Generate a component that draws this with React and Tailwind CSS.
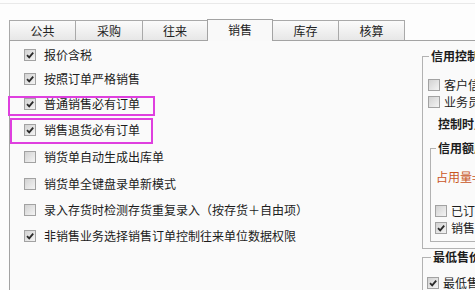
const tabs = [
  { label: '公共', w: 'w-[67px]' },
  { label: '采购', w: 'w-[68px]' },
  { label: '往来', w: 'w-[66px]' },
  { label: '销售', w: 'w-[66px]', active: true },
  { label: '库存', w: 'w-[67px]' },
  { label: '核算', w: 'w-[67px]' },
]

const options = [
  { text: '报价含税', checked: true, h: 'h-[24px]' },
  { text: '按照订单严格销售', checked: true, h: 'h-[24px]' },
  { text: '普通销售必有订单', checked: true, h: 'h-[26px]' },
  { text: '销售退货必有订单', checked: true, h: 'h-[26px]' },
  { text: '销货单自动生成出库单', checked: false, h: 'h-[28px]' },
  { text: '销货单全键盘录单新模式', checked: false, h: 'h-[26px]' },
  { text: '录入存货时检测存货重复录入（按存货＋自由项）', checked: false, h: 'h-[26px]' },
  { text: '非销售业务选择销售订单控制往来单位数据权限', checked: true, h: 'h-[26px]' },
]

function Box({ checked }) {
  return (
    <span className="inline-flex h-[12px] w-[12px] shrink-0 items-center justify-center border border-[#a2a2a2] bg-gradient-to-br from-[#d2d2d2] to-[#f4f4f4]">
      {checked && (
        <svg width="10" height="10" viewBox="0 0 10 10">
          <path d="M2 5.2 L4.2 7.4 L8.2 2.6" fill="none" stroke="#2a2a2a" strokeWidth="1.8" />
        </svg>
      )}
    </span>
  )
}

function Check({ checked, children, className = '' }) {
  return (
    <div className={`flex h-[17px] items-center gap-[4px] whitespace-nowrap ${className}`}>
      <Box checked={checked} />
      <span>{children}</span>
    </div>
  )
}

export default function App() {
  return (
    <div
      className="relative h-[290px] w-[475px] overflow-hidden bg-[#fdfdfd] text-[12px] leading-[16px] text-[#1c1c1c]"
      style={{ fontFamily: '"Noto Sans CJK SC", "Liberation Sans", sans-serif' }}
    >
      <div className="h-[4px] border-b border-[#e9e9e9]" />

      <div className="relative z-10 mt-[15px] flex h-[22px] items-end pl-[9px]">
        {tabs.map((t, i) => (
          <div
            key={t.label}
            className={
              t.active
                ? `relative z-10 -ml-px flex h-[22px] ${t.w} items-center justify-center border border-b-0 border-[#a3a3a3] bg-[#f9f9f9] pb-[1px]`
                : `${i > 0 ? '-ml-px' : ''} mb-px flex h-[20px] ${t.w} items-center justify-center border border-b-0 border-[#a9a9a9] bg-gradient-to-b from-[#fbfbfb] to-[#e7e7e7] text-[#222]`
            }
          >
            {t.label}
          </div>
        ))}
      </div>

      <div className="-mt-px ml-[9px] flex h-[260px] w-[560px] border-l border-t border-[#a3a3a3] bg-[#fafafa]">
        <div className="w-[412px] shrink-0 pl-[14px] pt-[2px]">
          {options.map((o) => (
            <div key={o.text} className={`flex items-center gap-[8px] whitespace-nowrap ${o.h}`}>
              <Box checked={o.checked} />
              <span>{o.text}</span>
            </div>
          ))}
        </div>

        <div className="w-[140px] shrink-0 overflow-hidden">
          <fieldset className="mt-[7px] border border-[#b2b2b2] pb-[6px]">
            <legend className="ml-[6px] h-[16px] px-[2px] font-bold">信用控制</legend>
            <Check checked={false} className="mt-[12px] pl-[5px]">客户信用</Check>
            <Check checked={false} className="pl-[5px]">业务员信用</Check>
            <div className="mt-[5px] h-[17px] whitespace-nowrap pl-[15px] font-bold leading-[17px]">控制时点</div>

            <fieldset className="ml-[7px] mt-[8px] border border-[#b2b2b2] pb-[5px]">
              <legend className="ml-[5px] h-[16px] px-[2px] font-bold">信用额度</legend>
              <div className="mt-[12px] h-[17px] whitespace-nowrap pl-[5px] leading-[17px] text-[#c9561f]">占用量=应收</div>
              <Check checked={false} className="mt-[17px] pl-[4px]">已订未出</Check>
              <Check checked className="pl-[4px]">销售出库</Check>
            </fieldset>
          </fieldset>

          <fieldset className="border border-b-0 border-[#b2b2b2] pb-[6px]">
            <legend className="ml-[8px] h-[16px] px-[2px] font-bold">最低售价</legend>
            <Check checked className="mt-[9px] pl-[4px]">最低售价</Check>
          </fieldset>
        </div>
      </div>

      {/* annotation boxes */}
      <div className="absolute left-[8px] top-[96px] h-[20px] w-[147px] border-2 border-[#df3fdf]" />
      <div className="absolute left-[10px] top-[118px] h-[26px] w-[143px] border-2 border-[#df3fdf]" />
    </div>
  )
}
